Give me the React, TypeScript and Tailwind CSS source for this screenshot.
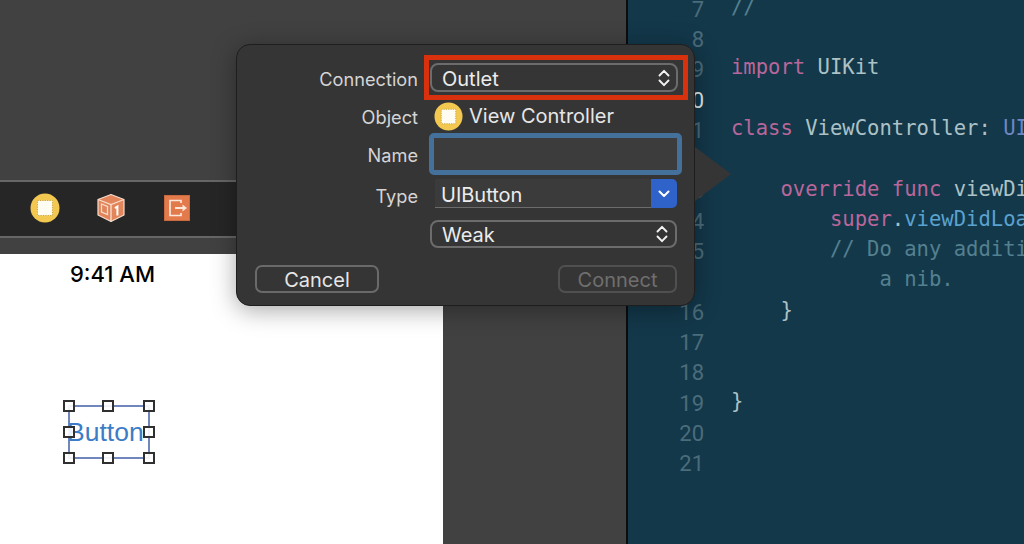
import React from "react";

const K = ({ children }: { children: React.ReactNode }) => <span className="text-[#b9679a]">{children}</span>;
const C = ({ children }: { children: React.ReactNode }) => <span className="text-[#54808f]">{children}</span>;

const lines: { n?: string; cur?: boolean; code?: React.ReactNode }[] = [
  { n: "7", code: <C>//</C> },
  { n: "8" },
  { n: "9", code: <><K>import</K> UIKit</> },
  { n: "10", cur: true },
  { n: "11", code: <><K>class</K> ViewController: <span className="text-[#6f86c4]">UIViewController</span></> },
  { n: "12" },
  { n: "13", code: <>{"    "}<K>override func</K> viewDidLoad()</> },
  { n: "14", code: <>{"        "}<K>super</K>.<span className="text-[#5aa2cf]">viewDidLoad</span>()</> },
  { n: "15", code: <C>{"        // Do any additional setup"}</C> },
  { code: <C>{"            a nib."}</C> },
  { n: "16", code: <>{"    }"}</> },
  { n: "17" },
  { n: "18" },
  { n: "19", code: <>{"}"}</> },
  { n: "20" },
  { n: "21" },
];

function Chevrons() {
  return (
    <svg width="12" height="18" viewBox="0 0 12 18" fill="none" stroke="#f2f2f2" strokeWidth="1.9" strokeLinecap="round" strokeLinejoin="round">
      <path d="M1.5 6.5 6 1.8l4.5 4.7" />
      <path d="M1.5 11.5 6 16.2l4.5-4.7" />
    </svg>
  );
}

function YellowIcon({ size }: { size: number }) {
  return (
    <svg width={size} height={size} viewBox="0 0 30 30">
      <circle cx="15" cy="15" r="14.5" fill="#f3c851" />
      <rect x="7.5" y="7.5" width="15" height="15" fill="#fffdf2" />
      <rect x="7.5" y="7.5" width="15" height="15" fill="none" stroke="#c9a440" strokeWidth="1" strokeDasharray="1.2 1.2" />
    </svg>
  );
}

function CubeIcon() {
  return (
    <svg width="30" height="30" viewBox="0 0 30 30">
      <path d="M15 1.5 28 6.5V22L15 28.5 2 22V6.5Z" fill="#e2855a" stroke="#f6dccd" strokeWidth="1.2" strokeLinejoin="round" />
      <path d="M2 6.5 15 11.5 28 6.5" fill="none" stroke="#f6dccd" strokeWidth="1.2" />
      <path d="M15 11.5V28.5" stroke="#f6dccd" strokeWidth="1.4" />
      <path d="M5.5 11 11.5 13.4V21.5L5.5 19Z" fill="none" stroke="#f6dccd" strokeWidth="1.3" />
      <path d="M19 15.2 21.4 13.6V22.6" fill="none" stroke="#fff" strokeWidth="2" />
    </svg>
  );
}

function ExitIcon() {
  return (
    <svg width="26" height="26" viewBox="0 0 26 26">
      <rect x="0.5" y="0.5" width="25" height="25" fill="#e27a4c" stroke="#c96a40" />
      <path d="M17 8V5.5H6V20.5H17V18" fill="none" stroke="#fbe6da" strokeWidth="1.7" />
      <path d="M11 13H19" stroke="#fbe6da" strokeWidth="2" />
      <path d="M18.5 9.5 23 13l-4.5 3.5Z" fill="#fbe6da" />
    </svg>
  );
}

function Handle({ cls }: { cls: string }) {
  return <div className={`absolute w-[12px] h-[12px] bg-white/90 border-2 border-[#303030] ${cls}`} />;
}

function Label({ children, cls = "" }: { children?: React.ReactNode; cls?: string }) {
  return <div className={`w-[181px] text-right text-[18.2px] text-[#d4d4d4] shrink-0 ${cls}`}>{children}</div>;
}

export default function App() {
  return (
    <div className="relative w-[1024px] h-[544px] overflow-hidden flex bg-[#414141] font-['Inter','Liberation_Sans',sans-serif]">
      {/* Interface Builder */}
      <div className="w-[626px] h-full flex flex-col shrink-0 bg-[#414141]">
        <div className="h-[180px] shrink-0" />
        <div className="w-[444px] h-[58px] shrink-0 bg-[#262626] border-y-2 border-[#666666] flex items-center pl-[30px]">
          <div className="-mt-[3px]"><YellowIcon size={30} /></div>
          <div className="ml-[36px] -mt-[3px]"><CubeIcon /></div>
          <div className="ml-[38px] -mt-[3px]"><ExitIcon /></div>
        </div>
        <div className="h-[16px] shrink-0" />
        <div className="relative w-[443px] flex-1 bg-white flex flex-col items-start">
          <div className="w-[225px] mt-[7px] text-center text-[22px] leading-[26px] font-medium text-black">9:41 AM</div>
          <div className="relative ml-[68px] mt-[118px] w-[82px] h-[54px] border-2 border-[#7186bd] flex items-center">
            <span className="text-[26.5px] leading-none pt-[1px] text-[#3d7cc6] font-['Liberation_Sans',sans-serif] whitespace-nowrap -ml-[3px]">Button</span>
            <Handle cls="-left-[7px] -top-[7px]" />
            <Handle cls="left-[32px] -top-[7px]" />
            <Handle cls="-right-[7px] -top-[7px]" />
            <Handle cls="-left-[7px] top-[19px]" />
            <Handle cls="-right-[7px] top-[19px]" />
            <Handle cls="-left-[7px] -bottom-[7px]" />
            <Handle cls="left-[32px] -bottom-[7px]" />
            <Handle cls="-right-[7px] -bottom-[7px]" />
          </div>
        </div>
      </div>
      <div className="w-[2px] h-full bg-[#0c0c0c] shrink-0" />

      {/* Code editor */}
      <div className="flex-1 h-full bg-[#13384a] overflow-hidden">
        <div className="-mt-[6px] flex flex-col">
          {lines.map((l, i) => (
            <div key={i} className="h-[30.3px] flex items-center shrink-0">
              <div className={`w-[76px] text-right text-[22px] font-['Roboto',sans-serif] shrink-0 ${l.cur ? "text-[#dfe7ea]" : "text-[#4b6c7a]"}`}>{l.n}</div>
              <div className="ml-[27px] -mt-[4px] text-[20.55px] font-['DejaVu_Sans_Mono',monospace] whitespace-pre text-[#acc2c6]">{l.code}</div>
            </div>
          ))}
        </div>
      </div>

      {/* Connection popover */}
      <div className="absolute left-[236px] top-[44px] w-[459px] h-[262px] rounded-[14px] bg-[#363535] border border-[#1e1e1e] shadow-[0_4px_24px_rgba(0,0,0,0.35)] text-[20px] leading-[24px]">
        <svg className="absolute left-[458px] top-[102px]" width="38" height="56" viewBox="0 0 38 56">
          <path d="M0 0 36 27 0 54Z" fill="#363535" />
        </svg>
        <div className="flex flex-col pt-[18px]">
          <div className="flex items-center h-[29px]">
            <Label cls="pt-[3px]">Connection</Label>
            <div className="ml-[12px] w-[248px] h-[29px] rounded-[8px] border-2 border-[#6c6c6c] flex items-center justify-between pl-[10px] pr-[6px] text-[#ececec]">
              <span className="pt-[2px]">Outlet</span> <Chevrons />
            </div>
          </div>
          <div className="flex items-center h-[28px] mt-[10px]">
            <Label cls="pt-[1px]">Object</Label>
            <div className="ml-[16px]"><YellowIcon size={29} /></div>
            <span className="ml-[6px] text-[#e6e6e6]">View Controller</span>
          </div>
          <div className="flex items-center h-[42px] mt-[3px]">
            <Label cls="pt-[2px]">Name</Label>
            <div className="ml-[11px] w-[253px] h-[42px] rounded-[5px] border-[5px] border-[#44709c] bg-[#3c3c3c]" />
          </div>
          <div className="flex items-center h-[29px] mt-[4px]">
            <Label cls="pt-[4px]">Type</Label>
            <div className="ml-[17px] w-[242px] h-[29px] flex">
              <div className="flex-1 border-b border-[#6c6c6c] bg-[#3b3b3b] pl-[6px] pt-[3px] text-[#ececec] flex items-center">UIButton</div>
              <div className="w-[26px] rounded-r-[5px] bg-[#2f63c9] flex items-center justify-center">
                <svg width="12" height="8" viewBox="0 0 12 8" fill="none" stroke="#ffffff" strokeWidth="2" strokeLinecap="round" strokeLinejoin="round"><path d="M1.5 1.5 6 6l4.5-4.5" /></svg>
              </div>
            </div>
          </div>
          <div className="flex items-center h-[28px] mt-[12px]">
            <Label />
            <div className="ml-[12px] w-[247px] h-[28px] rounded-[8px] border-2 border-[#6c6c6c] flex items-center justify-between pl-[10px] pr-[7px] text-[#ececec]">
              <span className="pt-[2px]">Weak</span> <Chevrons />
            </div>
          </div>
          <div className="flex items-center justify-between h-[28px] mt-[17px] pl-[18px] pr-[17px]">
            <div className="w-[124px] h-[28px] rounded-[7px] border-2 border-[#6a6a6a] flex items-center justify-center text-[#e6e6e6]"><span className="pt-[1px]">Cancel</span></div>
            <div className="w-[119px] h-[28px] rounded-[7px] border-2 border-[#505050] flex items-center justify-center text-[#6f6f6f]"><span className="pt-[1px]">Connect</span></div>
          </div>
        </div>
        <div className="absolute left-[187px] top-[10px] w-[264px] h-[45px] border-[5px] border-[#d9300d]" />
      </div>
    </div>
  );
}
